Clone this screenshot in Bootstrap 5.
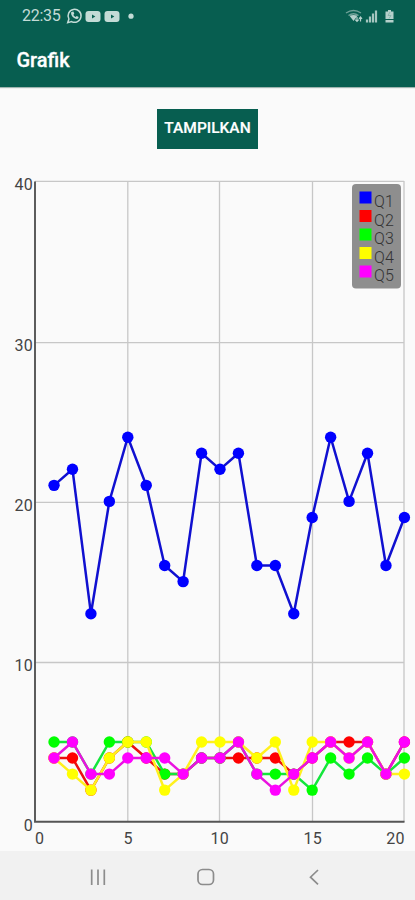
<!DOCTYPE html>
<html lang="id">
<head>
<meta charset="utf-8">
<meta name="viewport" content="width=device-width, initial-scale=1">
<title>Grafik</title>
<link rel="stylesheet" href="https://cdn.jsdelivr.net/npm/bootstrap@5.3.0/dist/css/bootstrap.min.css">
<style>
body{font-family:Roboto,"Liberation Sans",sans-serif;background:#fafafa;height:900px;overflow:hidden}
.app-head{background:#075e50;height:87px;box-shadow:0 1px 1px #9fb5b0}
.status{height:31px;color:#c3dbd6;font-size:16px;padding-left:22px;padding-right:20px}
.clock{width:39px;letter-spacing:-.25px;white-space:nowrap}
.app-title{font-size:20px;font-weight:500;line-height:59px;padding-left:16.5px;color:#fff;-webkit-text-stroke:.3px #fff}
.btn-show{background:#075e50;color:#fff;width:101px;height:40px;margin-top:21.5px;font-size:15.5px;font-weight:500;line-height:1;-webkit-text-stroke:.2px #fff;white-space:nowrap}
.btn-show:hover{background:#064f43;color:#fff}
.plot{height:703px;margin-top:-.5px}
.plot text{font-size:16px;fill:#444;letter-spacing:.2px}
.plot #legend text{fill:#333;font-weight:300}
.sysnav{height:49px;background:#f1f1f1}
</style>
<script src="https://cdn.jsdelivr.net/npm/bootstrap@5.3.0/dist/js/bootstrap.bundle.min.js"></script>
</head>
<body class="d-flex flex-column m-0">
<header class="app-head flex-shrink-0">
  <div class="status d-flex align-items-center justify-content-between">
    <div class="d-flex align-items-center">
      <span class="clock">22:35</span>
      <svg class="ms-1" width="72" height="18" viewBox="65 6 72 18" fill="none">
        <path d="M67.700 21.700l1.200-3.700a6.500 6.500 0 1 1 2.700 2.600z" stroke="#c3dbd6" stroke-width="1.500"/>
        <path d="M71.300 11c-1.200 3.500 3.300 7.800 6.700 6.800l.7-1.800-2-1.100-1.100 1c-1.100-.4-1.900-1.300-2.200-2.200l.9-1-.9-2.100z" fill="#c3dbd6"/>
        <rect x="85.500" y="10" width="15" height="11" rx="3" fill="#c3dbd6"/><path d="M92 13.500l3.300 2-3.300 2z" fill="#075e50"/>
        <rect x="104.500" y="10" width="15" height="11" rx="3" fill="#c3dbd6"/><path d="M111 13.500l3.300 2-3.300 2z" fill="#075e50"/>
        <circle cx="131" cy="15.200" r="2.600" fill="#c3dbd6"/>
      </svg>
    </div>
    <svg width="52" height="18" viewBox="343 6 52 18" fill="none">
      <path d="M346 12q7.500-5 15 0M348.500 14.500q5-3.500 10 0" stroke="#6fa198" stroke-width="1.400"/>
      <path d="M349.500 14.800q4-1.800 8 0L353.500 20z" fill="#b5d0cb"/>
      <path d="M357 16v4.500m-1.700-1.800l1.700 1.800 1.700-1.800M360.500 20.500V16m-1.500 1.800l1.500-1.800 1.500 1.800" stroke="#b5d0cb" stroke-width="1.200"/>
      <path d="M367 21.500v-3M370 21.500v-6M373 21.500v-9M376 21.500v-12" stroke="#a5c5bf" stroke-width="2.200"/>
      <path d="M388 9h3v1.500h2.500V18h-8v-7.500h2.500zM385.500 19h8v2.500h-8z" fill="#b5d0cb"/>
      <path d="M390 11l-2 3.500h3l-2 3" stroke="#79aaa1" stroke-width=".7"/>
    </svg>
  </div>
  <div class="app-title">Grafik</div>
</header>
<main class="flex-grow-1 d-flex flex-column align-items-center">
  <button class="btn btn-show rounded-0 border-0 p-0 flex-shrink-0" type="button">TAMPILKAN</button>
  <svg class="plot w-100 flex-shrink-0" viewBox="0 148 415 703" id="chart" role="img" aria-label="Grafik Q1 sampai Q5">
    <g stroke="#c7c7c7" stroke-width="1.300">
      <path d="M35 181.300H404M35 342.600H404M35 502.300H404M35 662.500H404M127.800 181V822M219.500 181V822M312.500 181V822M404 181V822"/>
    </g>
    <path d="M35 181.500V821.800H404.500" fill="none" stroke="#555" stroke-width="1.900"/>
    <g text-anchor="end"><text x="33" y="190">40</text><text x="33" y="350.500">30</text><text x="33" y="511">20</text><text x="33" y="671">10</text><text x="33" y="831">0</text></g>
    <g text-anchor="middle"><text x="39.500" y="843.500">0</text><text x="128" y="843.500">5</text><text x="219.800" y="843.500">10</text><text x="312.700" y="843.500">15</text><text x="395.500" y="843.500">20</text></g>
    <g id="series"></g>
    <rect x="352" y="184" width="49" height="104.500" rx="4" fill="#8e8e8e"/>
    <g id="legend"></g>
  </svg>
</main>
<nav class="sysnav flex-shrink-0">
  <svg class="d-block w-100" height="49" viewBox="0 851 415 49" fill="none" stroke="#8c8c8c" stroke-width="1.700">
    <path d="M91.700 869.500v15.500M98 869.500v15.500M104.300 869.500v15.500"/>
    <rect x="198" y="869.500" width="15.500" height="15" rx="4.500"/>
    <path d="M318 870l-7.500 7.200 7.500 7.200"/>
  </svg>
</nav>
<script>
const data=[
 ['Q1','#0000ff','#1010d0',[21,22,13,20,24,21,16,15,23,22,23,16,16,13,19,24,20,23,16,19]],
 ['Q2','#ff0000','#ea1010',[4,4,2,4,5,4,3,3,4,4,4,4,4,3,4,5,5,5,3,5]],
 ['Q3','#00ff00','#14e63c',[5,5,3,5,5,5,3,3,4,4,5,3,3,3,2,4,3,4,3,4]],
 ['Q4','#ffff00','#fff01e',[4,3,2,4,5,5,2,3,5,5,5,4,5,2,5,5,4,5,3,3]],
 ['Q5','#ff00ff','#ea12e0',[4,5,3,3,4,4,4,3,4,4,5,3,2,3,4,5,4,5,3,5]]];
const X=i=>35.6+18.44*(i+1), Y=v=>822.2-16.04*v;
let s='',l='';
data.forEach(([name,dot,line,v],k)=>{
  s+=`<polyline fill="none" stroke="${line}" stroke-width="2.5" points="${v.map((n,i)=>X(i)+','+Y(n)).join(' ')}"/>`;
  s+=v.map((n,i)=>`<circle cx="${X(i)}" cy="${Y(n)}" r="5.7" fill="${dot}"/>`).join('');
  const y=191.500+k*18.500;
  l+=`<rect x="359.500" y="${y}" width="12" height="12" fill="${dot}"/><text x="374" y="${y+15.500}">${name}</text>`;
});
document.getElementById('series').innerHTML=s;
document.getElementById('legend').innerHTML=l;
</script>
</body>
</html>
